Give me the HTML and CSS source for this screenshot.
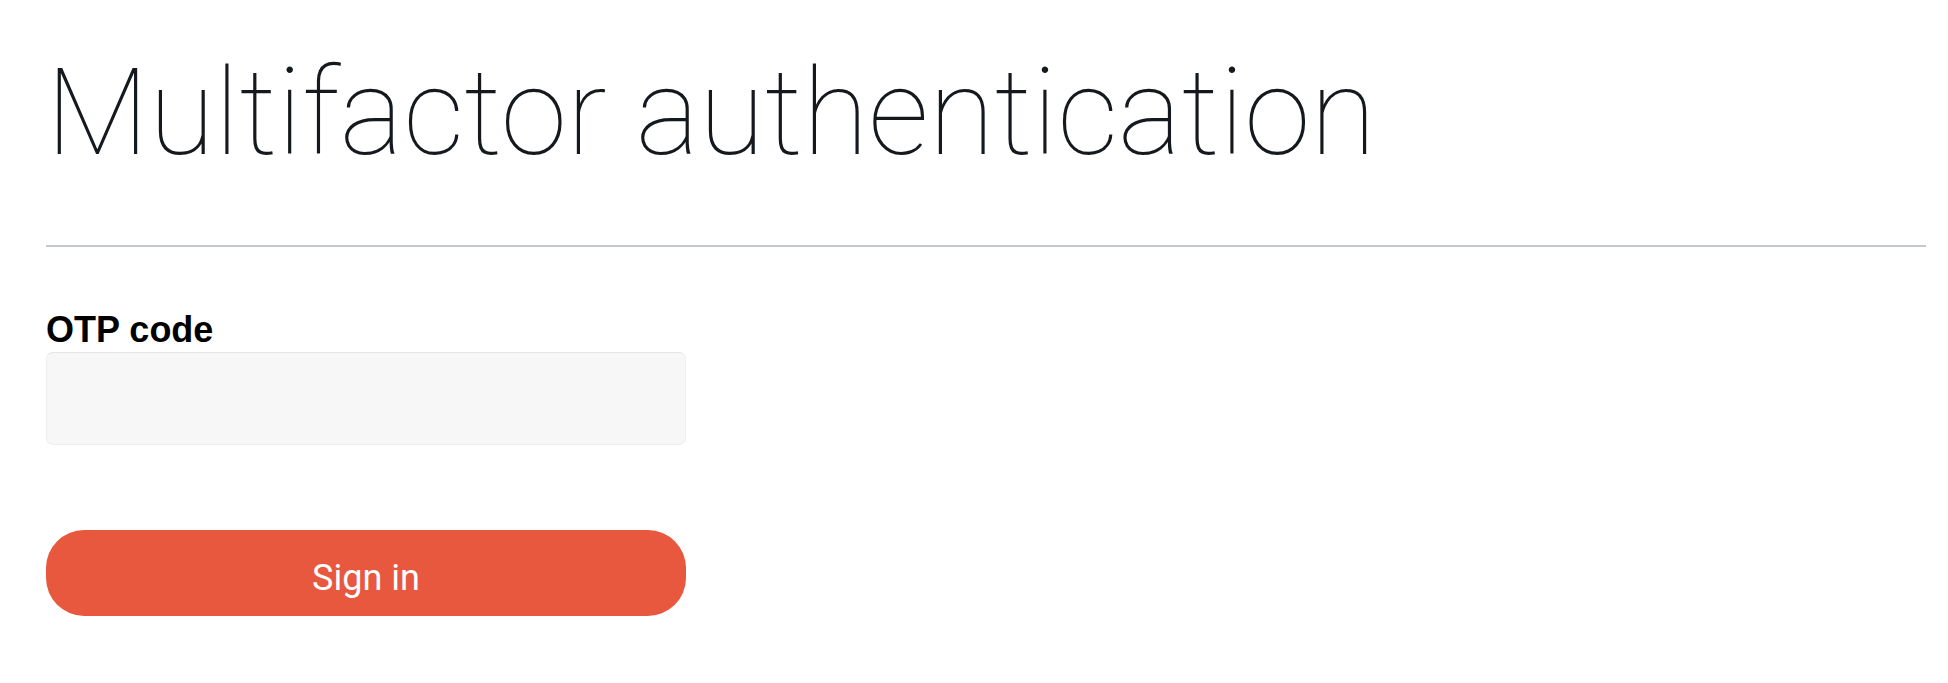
FILE: index.html
```html
<!DOCTYPE html>
<html lang="en">
<head>
<meta charset="utf-8">
<title>Multifactor authentication</title>
<link rel="stylesheet" href="styles.css">
</head>
<body>
<main class="page">
  <h1 class="title">Multifactor authentication</h1>
  <hr class="rule">
  <form class="form" onsubmit="return false">
    <label class="label" for="otp">OTP code</label>
    <input class="input" id="otp" type="text" autocomplete="one-time-code">
    <button class="button" type="submit">Sign in</button>
  </form>
</main>
</body>
</html>
```

FILE: styles.css
```css
html, body {
  margin: 0;
  padding: 0;
  background: #ffffff;
}

.page {
  padding: 0 22px 0 46px;
  font-family: "Liberation Sans", Arial, sans-serif;
  color: #000;
}

.title {
  margin: 41px 0 0;
  font-family: Roboto, "Liberation Sans", sans-serif;
  font-weight: 100;
  font-size: 120px;
  line-height: 1.2;
  color: #15191d;
  letter-spacing: 0;
}

.rule {
  margin: 60px 0 0;
  border: 0;
  height: 2px;
  background: #c5c8cc;
}

.form {
  display: flex;
  flex-direction: column;
  align-items: flex-start;
  width: 640px;
  padding-top: 63px;
}

.label {
  display: block;
  font-family: "Liberation Sans", Arial, sans-serif;
  font-weight: 700;
  font-size: 36px;
  line-height: 40px;
  color: #000;
}

.input {
  box-sizing: border-box;
  margin: 2px 0 0;
  width: 640px;
  height: 93px;
  background: #f7f7f7;
  border: 1px solid #eeeeee;
  border-top-color: #e6e6e6;
  border-radius: 7px;
  outline: none;
  font-size: 36px;
  padding: 0 16px;
}

.button {
  box-sizing: border-box;
  margin-top: 85px;
  width: 640px;
  height: 86px;
  border: 0;
  border-radius: 38px;
  background: #e8583f;
  color: #ffffff;
  font-family: Roboto, "Liberation Sans", sans-serif;
  font-size: 36px;
  font-weight: 400;
  padding: 9px 0 0;
  display: flex;
  align-items: center;
  justify-content: center;
  cursor: pointer;
}
```
